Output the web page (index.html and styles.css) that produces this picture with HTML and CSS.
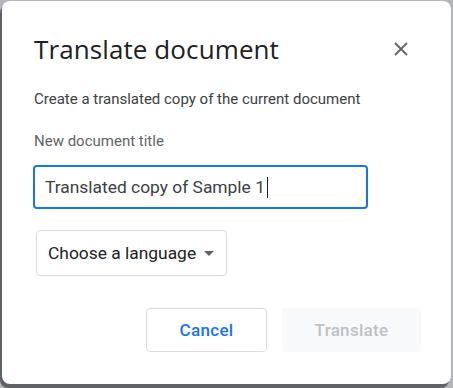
FILE: index.html
```html
<!DOCTYPE html>
<html lang="en">
<head>
    <meta charset="UTF-8">
    <meta name="viewport" content="width=device-width, initial-scale=1.0">
    <title>Translate document</title>
    <link rel="stylesheet" href="styles.css">
</head>
<body>

    <!-- Translate dialog -->
    <div class="dialog">
        <div class="dialog-header">
            <h1>Translate document</h1>
            <button class="close-btn" aria-label="Close">
                <svg width="14" height="14" viewBox="0 0 14 14">
                    <path d="M1 1 L13 13 M13 1 L1 13" stroke="#5f6368" stroke-width="1.8" fill="none"/>
                </svg>
            </button>
        </div>

        <p class="subtitle">Create a translated copy of the current document</p>

        <label class="field-label">New document title</label>
        <div class="title-input">
            <span class="input-text">Translated copy of Sample 1</span><span class="caret"></span>
        </div>

        <div class="language-select">
            <span>Choose a language</span>
            <span class="arrow"></span>
        </div>

        <div class="actions">
            <button class="btn btn-cancel">Cancel</button>
            <button class="btn btn-translate" disabled>Translate</button>
        </div>
    </div>

</body>
</html>
```

FILE: styles.css
```css
html, body {
    height: 100%;
}

body {
    margin: 0;
    padding: 1px 2px 0 2px;
    box-sizing: border-box;
    background: #b4b6b9;
    font-family: Roboto, "Liberation Sans", sans-serif;
    overflow: hidden;
}

.dialog {
    width: 449px;
    height: 383px;
    box-sizing: border-box;
    background: white;
    border-radius: 8px;
    padding: 31px 32px 0 32px;
    box-shadow: -2px 4px 0 #5f6368;
}

.dialog-header {
    display: flex;
    align-items: center;
    justify-content: space-between;
    height: 34px;
}

h1 {
    margin: 0;
    font-family: "Open Sans", Roboto, sans-serif;
    font-weight: 400;
    font-size: 26px;
    line-height: 34px;
    color: #202124;
    letter-spacing: 0.1px;
}

.close-btn {
    background: none;
    border: none;
    padding: 0;
    width: 14px;
    height: 14px;
    margin-right: 11px;
}

.subtitle {
    margin: 23px 0 0 0;
    font-size: 15px;
    line-height: 20px;
    color: #3c4043;
}

.field-label {
    display: block;
    margin-top: 22px;
    font-size: 15px;
    line-height: 20px;
    color: #5f6368;
}

.title-input {
    margin-top: 14px;
    margin-left: -1px;
    width: 335px;
    height: 44px;
    box-sizing: border-box;
    border: 2px solid #1a73e8;
    border-radius: 4px;
    padding: 0 10px;
    display: flex;
    align-items: center;
    font-size: 17.4px;
    color: #3c4043;
}

.caret {
    display: inline-block;
    width: 1px;
    height: 21px;
    margin-left: 2px;
    background: #202124;
}

.language-select {
    margin-top: 21px;
    margin-left: 2px;
    width: 191px;
    height: 46px;
    box-sizing: border-box;
    border: 1px solid #dadce0;
    border-radius: 4px;
    padding: 0 11px;
    display: flex;
    align-items: center;
    justify-content: space-between;
    font-size: 17.4px;
    color: #202124;
}

.arrow {
    width: 0;
    height: 0;
    border-left: 5px solid transparent;
    border-right: 5px solid transparent;
    border-top: 5px solid #5f6368;
    margin-right: 1px;
}

.actions {
    display: flex;
    justify-content: flex-end;
    gap: 15px;
    margin-top: 32px;
    margin-right: -2px;
}

.btn {
    height: 44px;
    border-radius: 4px;
    font-family: Roboto, "Liberation Sans", sans-serif;
    font-size: 17px;
    font-weight: 500;
    letter-spacing: 0.3px;
}

.btn-cancel {
    width: 121px;
    background: white;
    border: 1px solid #dadce0;
    color: #1a73e8;
}

.btn-translate {
    width: 139px;
    background: #f8f9fa;
    border: none;
    color: #bdc1c6;
}
```
